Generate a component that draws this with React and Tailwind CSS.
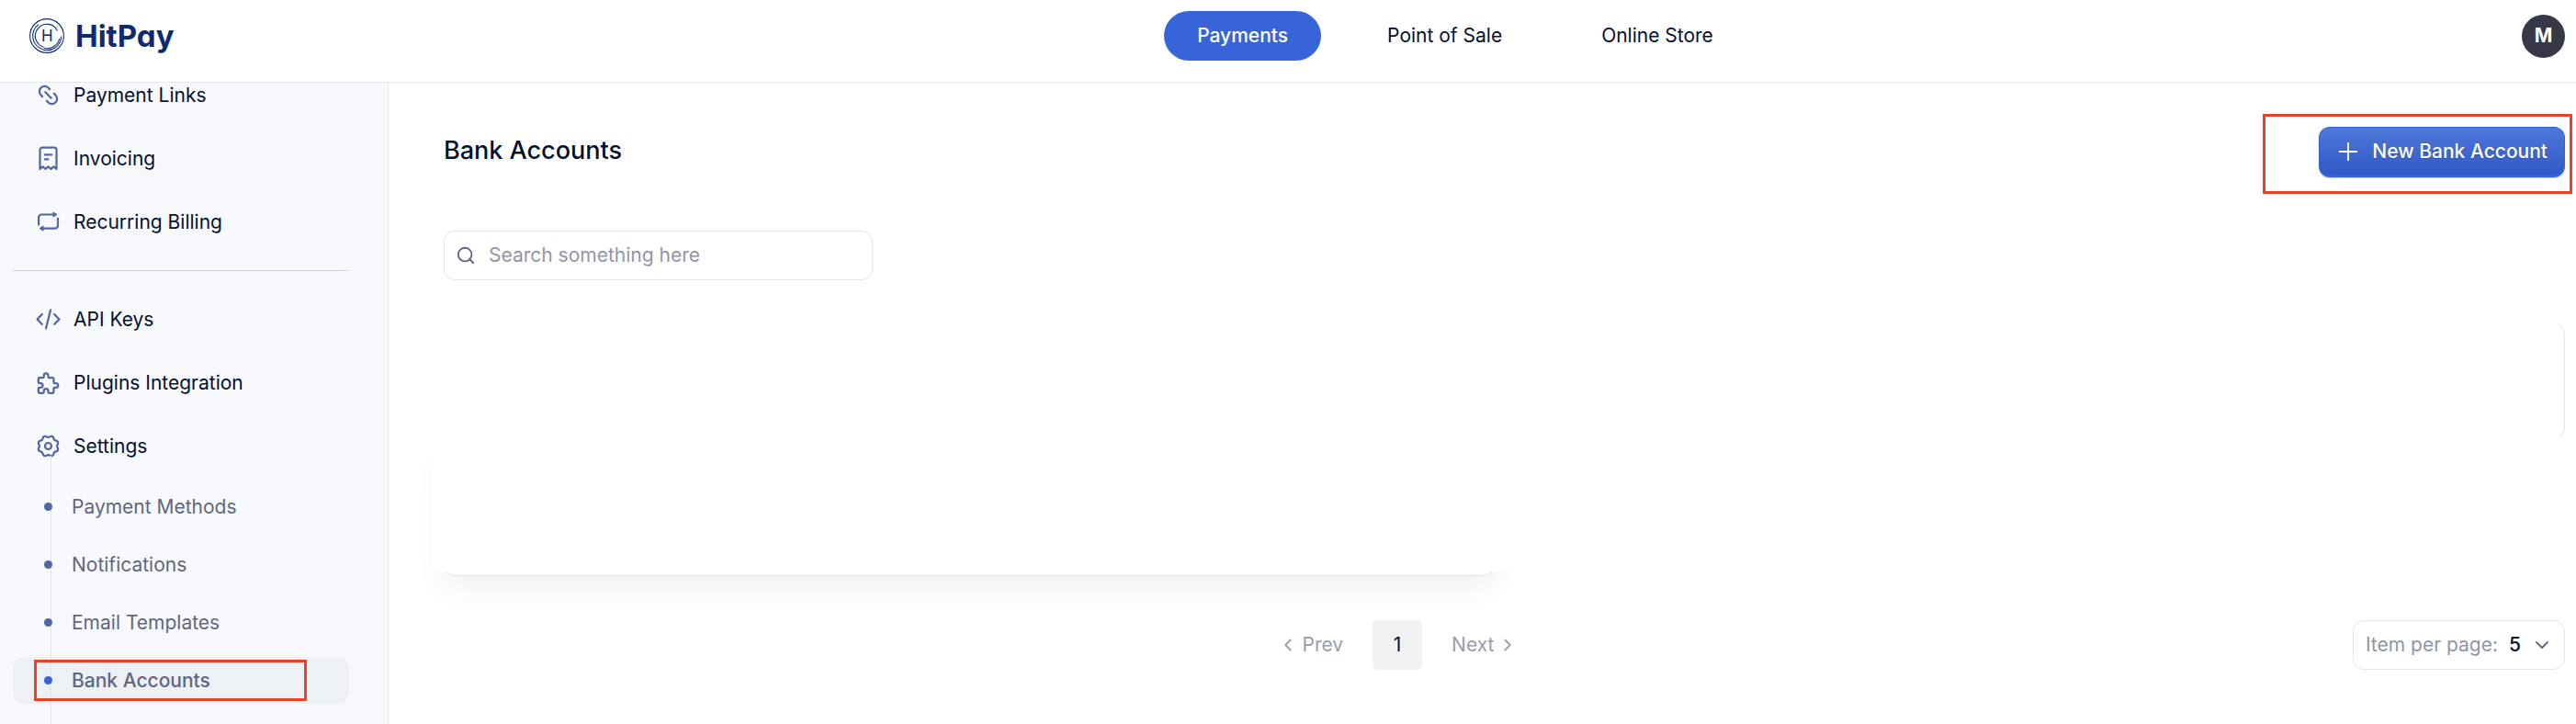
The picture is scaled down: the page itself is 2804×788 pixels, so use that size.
import React, { useState } from 'react';
import { ChevronDown, ChevronLeft, ChevronRight, Link2, Plus, Search } from 'lucide-react';
import { twMerge } from 'tailwind-merge';

/* ---------- Icons ---------- */

function Icon({ children, viewBox = '0 0 27 27', className }) {
  return (
    <svg
      viewBox={viewBox}
      fill="none"
      stroke="currentColor"
      strokeWidth="2.2"
      strokeLinecap="round"
      strokeLinejoin="round"
      className={twMerge('size-[27px] shrink-0', className)}
      aria-hidden="true"
    >
      {children}
    </svg>
  );
}

const LinkIcon = () => <Link2 className="size-[27px] shrink-0 rotate-45" aria-hidden="true" />;

const InvoiceIcon = () => (
  <Icon>
    <path d="M4.5 25V4.2a2.5 2.5 0 0 1 2.5-2.5h13a2.5 2.5 0 0 1 2.5 2.5V25l-3-2.6-3 2.4-3-2.4-3 2.4-3-2.4z" />
    <path d="M9.8 9.3h7.4M9.8 14.3h3.6" />
  </Icon>
);

const RecurringIcon = () => (
  <Icon>
    <path d="M3.1 16.6V8.7a3.2 3.2 0 0 1 3.2-3.2H19" />
    <path d="M24 9.8v7.6a3.2 3.2 0 0 1-3.2 3.2H8" />
    <path d="M19.2 3.2 23 5.5l-3.8 2.3zM7.8 18.3 4 20.6l3.8 2.3z" fill="currentColor" strokeWidth="1" />
  </Icon>
);

const CodeIcon = () => (
  <Icon>
    <path d="M6.8 7.9 1.6 13.4l5.2 5.5M20.2 7.9l5.2 5.5-5.2 5.5M16 3.4l-5 20" />
  </Icon>
);

const PuzzleIcon = () => (
  <Icon viewBox="0.65 0.15 22.7 22.7">
    <path
      strokeWidth="1.9"
      d="M4 7h3a1 1 0 0 0 1-1V5a2 2 0 0 1 4 0v1a1 1 0 0 0 1 1h3a1 1 0 0 1 1 1v3a1 1 0 0 0 1 1h1a2 2 0 0 1 0 4h-1a1 1 0 0 0-1 1v3a1 1 0 0 1-1 1h-3a1 1 0 0 1-1-1v-1a2 2 0 0 0-4 0v1a1 1 0 0 1-1 1H4a1 1 0 0 1-1-1v-3a1 1 0 0 1 1-1h1a2 2 0 0 0 0-4H4a1 1 0 0 1-1-1V8a1 1 0 0 1 1-1"
    />
  </Icon>
);

// Eight soft teeth around the hub
const GEAR_POINTS = [...Array(96)]
  .map((_, i) => {
    const a = (i / 96) * Math.PI * 2;
    const r = 10.5 - 0.95 * Math.cos(8 * a);
    return `${(13.5 + r * Math.cos(a)).toFixed(2)},${(13.5 + r * Math.sin(a)).toFixed(2)}`;
  })
  .join(' ');

const SettingsIcon = () => (
  <Icon>
    <polygon points={GEAR_POINTS} />
    <circle cx="13.5" cy="13.5" r="3.5" />
  </Icon>
);

function Logo() {
  return (
    <a href="#home" className="flex items-center gap-3 text-[#0e2a72]">
      <svg viewBox="0 0 38 38" className="size-[38px]" fill="none" stroke="currentColor" strokeWidth="1.1" aria-hidden="true">
        <circle cx="19" cy="19" r="18.4" />
        <path d="M30.5 13.5A12.7 12.7 0 1 0 15.5 31.2" />
        <path d="M10 6.6A15.4 15.4 0 0 0 14.5 33.7" />
        <path d="M34.8 19.5A15.8 15.8 0 0 1 14.5 34" />
        <path d="M32.7 22A13.9 13.9 0 0 1 15.5 32.3" />
        <text
          x="19.3"
          y="25.2"
          textAnchor="middle"
          fill="currentColor"
          stroke="none"
          className="font-['Inter'] text-[17px] font-normal"
        >
          H
        </text>
      </svg>
      <span className="font-['Inter'] text-[33px] leading-10 font-bold [font-feature-settings:'cv11']">HitPay</span>
    </a>
  );
}

/* ---------- Data ---------- */

const TABS = ['Payments', 'Point of Sale', 'Online Store'];

const PRIMARY_LINKS = [
  { label: 'Payment Links', icon: LinkIcon },
  { label: 'Invoicing', icon: InvoiceIcon },
  { label: 'Recurring Billing', icon: RecurringIcon },
];

const SECONDARY_LINKS = [
  { label: 'API Keys', icon: CodeIcon },
  { label: 'Plugins Integration', icon: PuzzleIcon },
  { label: 'Settings', icon: SettingsIcon },
];

const SETTINGS_LINKS = ['Payment Methods', 'Notifications', 'Email Templates', 'Bank Accounts'];

/* ---------- Layout parts ---------- */

function Header() {
  const [tab, setTab] = useState('Payments');

  return (
    <header className="flex h-[90px] shrink-0 items-center border-b border-[#e5e6ea] bg-white pr-3 pb-[11px]">
      <div className="w-[423px] shrink-0 pl-8">
        <Logo />
      </div>
      <nav className="flex flex-1 justify-center gap-9">
        {TABS.map((name) => (
          <button
            key={name}
            type="button"
            onClick={() => setTab(name)}
            className={twMerge('h-[54px] rounded-full px-9', tab === name && 'bg-[#3864d9] font-medium text-white')}
          >
            {name}
          </button>
        ))}
      </nav>
      <button type="button" className="size-[47px] rounded-full bg-[#363848] font-bold text-white" aria-label="Account">
        M
      </button>
    </header>
  );
}

function NavItem({ label, icon: ItemIcon }) {
  return (
    <a href="#nav" className="flex h-[69px] items-center gap-[14px] pl-[25px]">
      <span className="text-[#50679f]">
        <ItemIcon />
      </span>
      {label}
    </a>
  );
}

function SubNavItem({ label, active }) {
  return (
    <a
      href="#settings"
      className={twMerge(
        'relative flex h-[51px] items-center gap-[21px] rounded-xl pl-[34px] text-[#61667f]',
        active && 'bg-[#edf0f5] font-medium'
      )}
    >
      <span className={twMerge('z-10 size-[9px] rounded-full bg-[#50679f]', active && 'bg-[#3864d9]')} />
      {label}
      {active && <span className="absolute top-[3px] left-[23px] z-10 h-[45px] w-[297px] border-3 border-[#ea4228]" />}
    </a>
  );
}

function Sidebar() {
  return (
    <aside className="w-[423px] shrink-0 overflow-hidden border-r border-[#e3e5ec] bg-[#f8f9fd] pr-[42px] pl-[14px]">
      <div className="-mt-[21px]">
        {PRIMARY_LINKS.map((item) => (
          <NavItem key={item.label} {...item} />
        ))}
      </div>
      <hr className="mt-[18px] mb-[18px] border-[#cbd5e1]" />
      {SECONDARY_LINKS.map((item) => (
        <NavItem key={item.label} {...item} />
      ))}
      <div className="relative flex flex-col gap-3 pt-[6px] pb-8">
        {/* Tree line from the gear down through the sub items */}
        <span className="absolute -top-6 bottom-0 left-[41px] z-[5] w-px bg-[#e1e4ea]" />
        {SETTINGS_LINKS.map((label) => (
          <SubNavItem key={label} label={label} active={label === 'Bank Accounts'} />
        ))}
      </div>
    </aside>
  );
}

function Pagination() {
  return (
    <div className="mt-12 flex items-center">
      <div className="flex flex-1 items-center justify-center gap-8 text-[#9a9cae]">
        <button type="button" className="flex items-center gap-1">
          <ChevronLeft className="size-[22px]" />
          Prev
        </button>
        <button type="button" className="size-[54px] rounded-md bg-[#f1f1f4] text-[#03102f]">
          1
        </button>
        <button type="button" className="flex items-center gap-1">
          Next
          <ChevronRight className="size-[22px]" />
        </button>
      </div>
      <div className="relative flex h-[54px] items-center rounded-xl border border-[#e4e5e9] pl-[13px]">
        <label htmlFor="per-page" className="text-[#9295a8]">
          Item per page:
        </label>
        <select
          id="per-page"
          defaultValue="5"
          className="h-full w-[72px] appearance-none bg-transparent pl-3 font-medium outline-none"
        >
          <option>5</option>
          <option>10</option>
          <option>25</option>
        </select>
        <ChevronDown className="pointer-events-none absolute right-3 size-6 text-[#61667f]" strokeWidth={1.8} />
      </div>
    </div>
  );
}

export default function App() {
  return (
    <div className="flex h-screen flex-col overflow-hidden bg-white font-['Inter',sans-serif] text-[21px] leading-8 text-[#03102f]">
      <Header />
      <div className="flex min-h-0 flex-1">
        <Sidebar />
        <main className="min-w-0 flex-1 pt-12 pr-3 pl-[60px]">
          <div className="flex h-[55px] items-center justify-between">
            <h1 className="pb-1 text-[27px] font-medium">Bank Accounts</h1>
            <div className="relative">
              <button
                type="button"
                className="flex h-[55px] items-center gap-[10px] rounded-xl border border-b-3 border-[#3561d8] bg-linear-to-b from-[#4f78da] to-[#2f59c4] pr-[18px] pl-[15px] font-medium text-white shadow-[0_1px_1px_#b9c8f0] text-shadow-xs"
              >
                <Plus className="size-8" strokeWidth={1.4} />
                New Bank Account
              </button>
              <span className="pointer-events-none absolute -top-[14px] -right-2 -bottom-[18px] -left-[61px] border-3 border-[#ea4228]" />
            </div>
          </div>

          <div className="mt-[58px] flex h-[54px] w-[467px] items-center gap-[14px] rounded-xl border border-[#e4e5e9] pl-3">
            <Search className="size-[22px] text-[#61667f]" strokeWidth={2} aria-hidden="true" />
            <input
              type="search"
              aria-label="Search"
              placeholder="Search something here"
              className="min-w-0 flex-1 bg-transparent outline-none placeholder:text-[#9295a8]"
            />
          </div>

          {/* Empty table area: the white cover hides all but the card edges */}
          <div className="relative mt-[47px]">
            <div className="h-[126px] rounded-xl border border-[#e4e5e9]" />
            <div className="mt-3 h-[137px] w-[1144px] rounded-xl border border-[#e0e4e5] shadow-[0_10px_32px_rgba(20,50,40,0.08)]" />
            <div className="absolute -top-3 right-[6px] bottom-[5px] -left-3 bg-white" />
          </div>

          <Pagination />
        </main>
      </div>
    </div>
  );
}
